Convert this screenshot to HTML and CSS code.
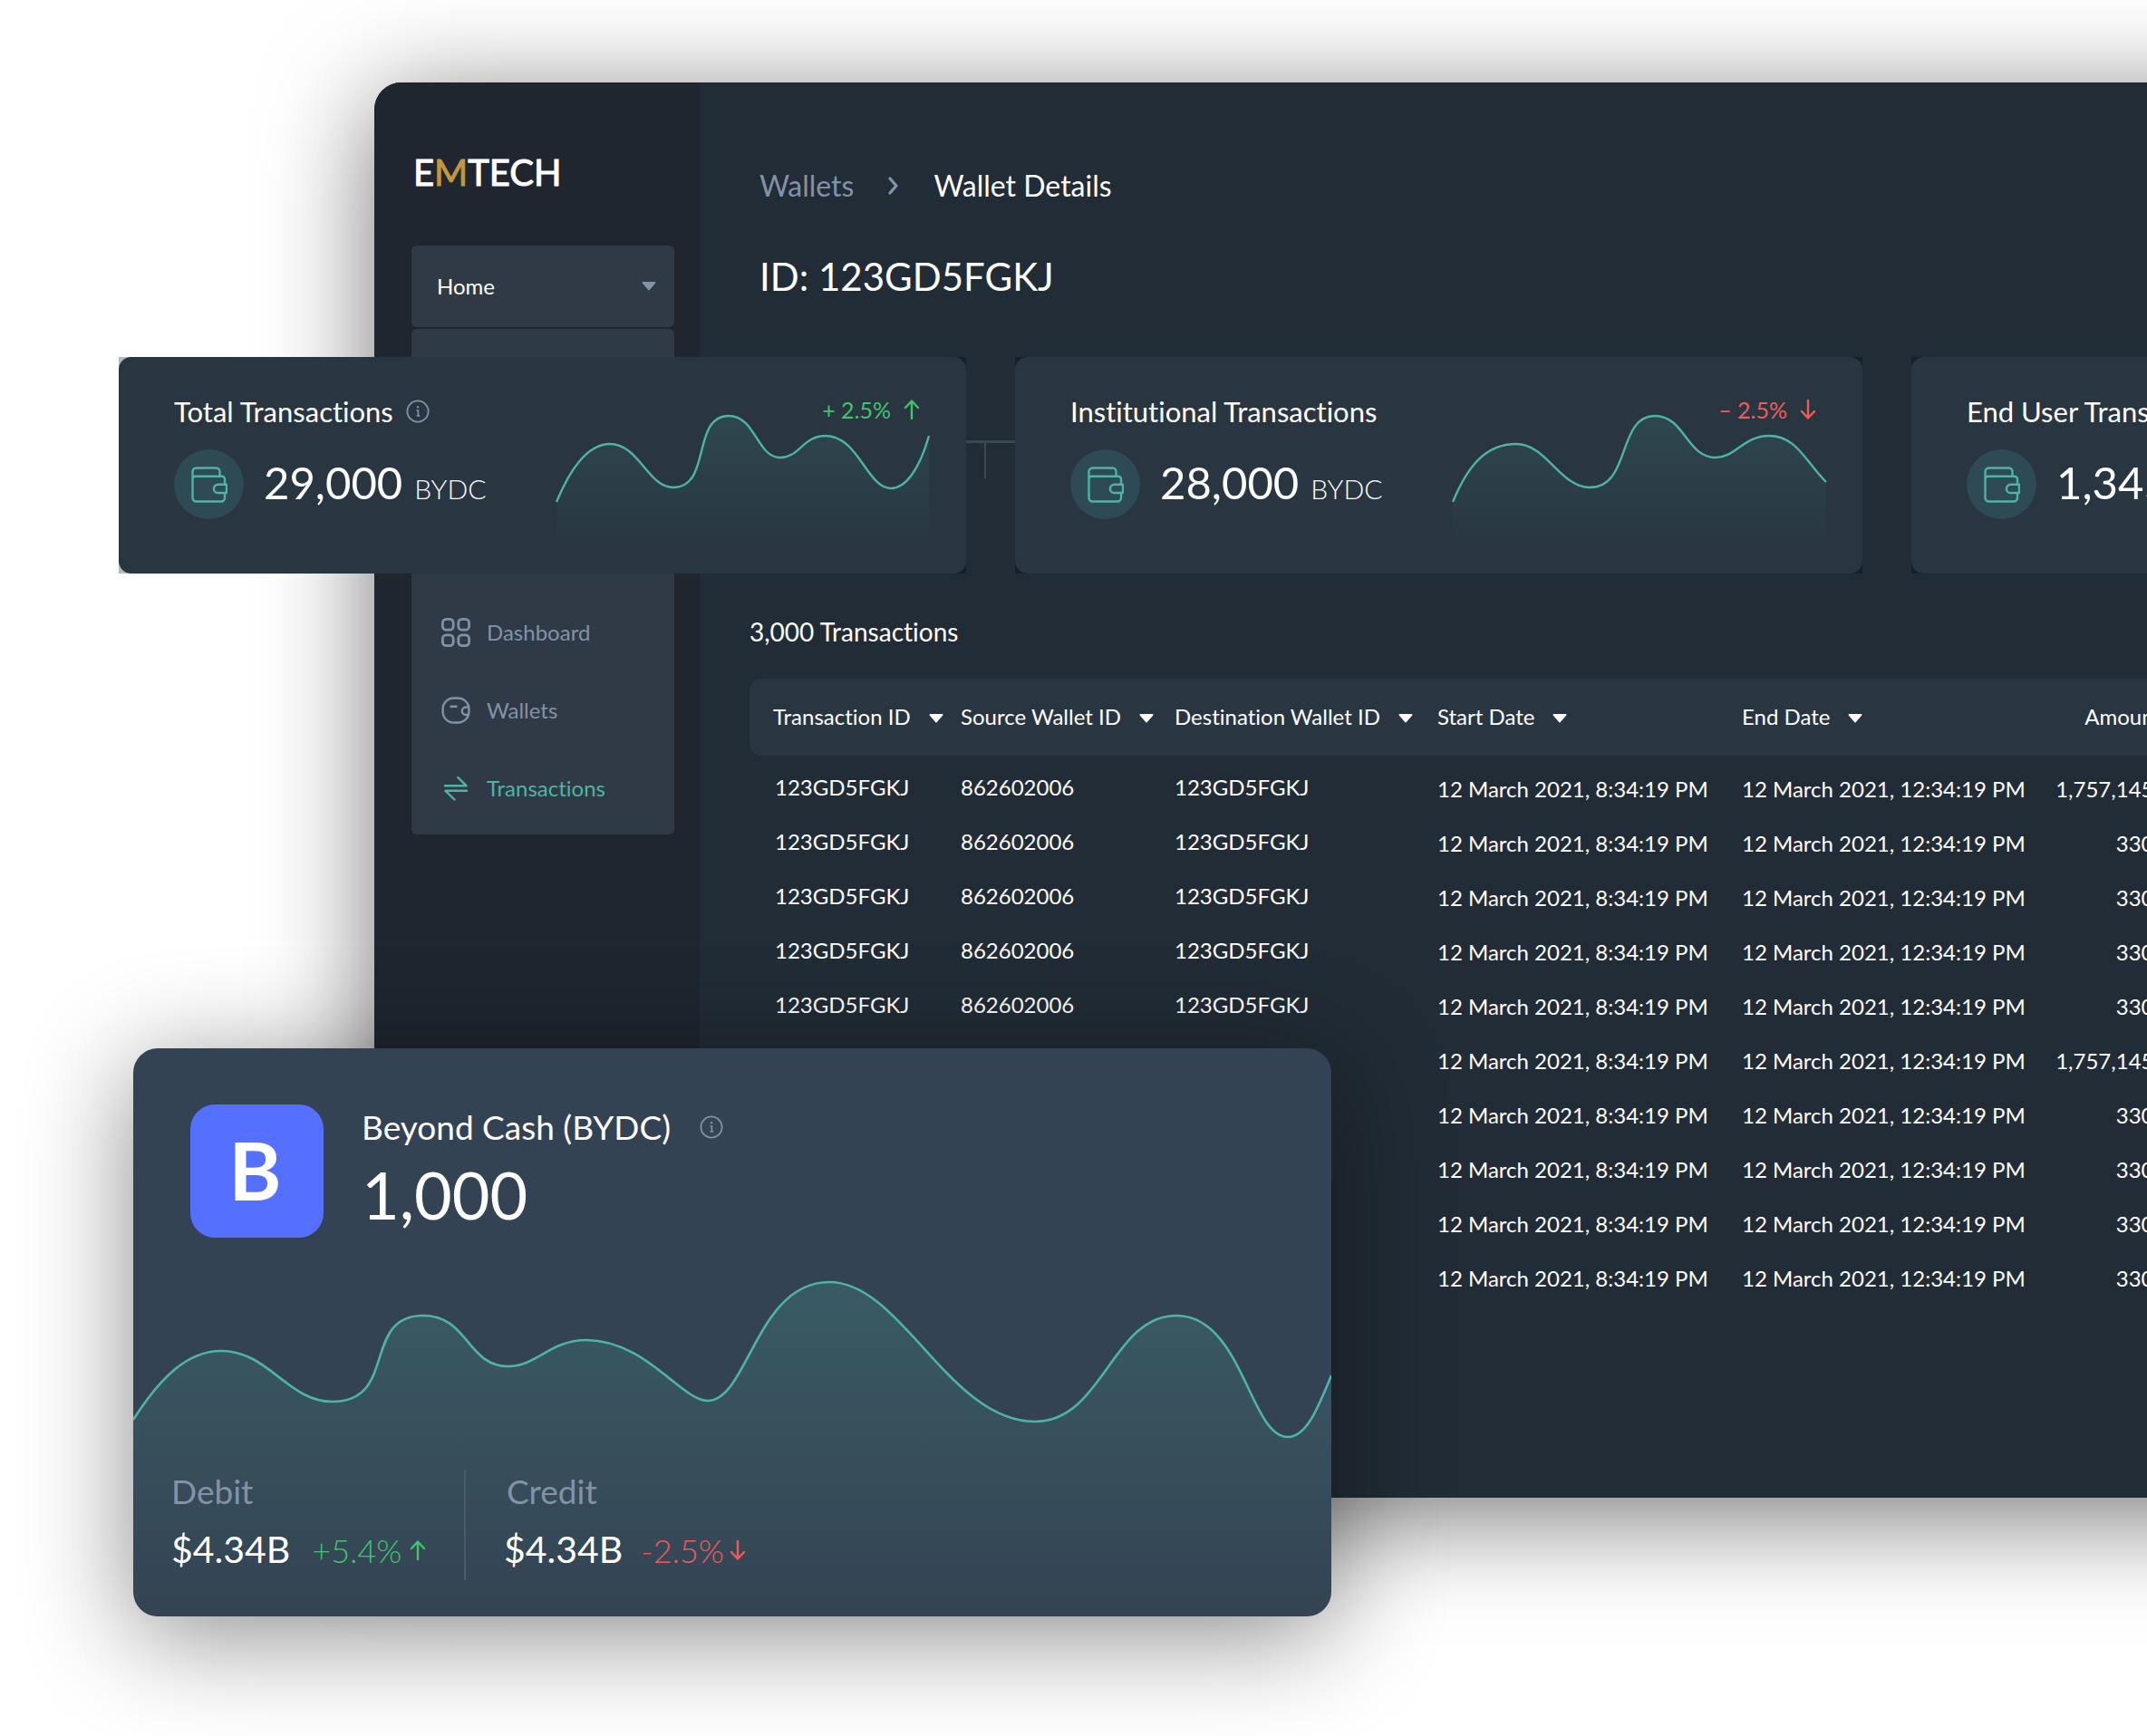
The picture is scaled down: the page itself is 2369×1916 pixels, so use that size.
FILE: index.html
```html
<!DOCTYPE html>
<html lang="en">
<head>
<meta charset="utf-8">
<title>EMTECH – Wallet Details</title>
<link rel="stylesheet" href="styles.css">
</head>
<body>
<svg class="sprite" aria-hidden="true">
  <defs>
    <linearGradient id="fade" x1="0" y1="0" x2="0" y2="1">
      <stop offset="0" stop-color="#4aaea0" stop-opacity=".22"/>
      <stop offset="1" stop-color="#4aaea0" stop-opacity="0"/>
    </linearGradient>
    <linearGradient id="fade-soft" x1="0" y1="0" x2="0" y2="1">
      <stop offset="0" stop-color="#4aaea0" stop-opacity=".14"/>
      <stop offset="1" stop-color="#4aaea0" stop-opacity=".01"/>
    </linearGradient>
  </defs>
  <symbol id="info" viewBox="0 0 26 26">
    <circle cx="13" cy="13" r="11.6" fill="none" stroke="#8292a8" stroke-width="1.8"/>
    <path d="M11.400 12h2v6M11.600 18h3.800" fill="none" stroke="#8292a8" stroke-width="1.700"/>
    <circle cx="13" cy="8.200" r="1.200" fill="#8292a8"/>
  </symbol>
  <symbol id="wallet" viewBox="0 0 40 40">
    <g fill="none" stroke="#4fb3a5" stroke-width="2.4" stroke-linejoin="round">
      <path d="M1.500 5.500a4 4 0 0 1 4-4h22a4 4 0 0 1 4 4v5.200M1.500 5.500v29a4 4 0 0 0 4 4h27.500a4 4 0 0 0 4-4v-5.500M1.500 13.500a3 3 0 0 1 3-2.800h29.500a3 3 0 0 1 3 3v5.800"/>
      <path d="M39 19.800h-9.500a4.600 4.600 0 0 0 0 9.200h9.500z"/>
    </g>
  </symbol>
  <symbol id="caret" viewBox="0 0 16 10"><path d="M1.500 0h13a1 1 0 0 1 .8 1.600L8.800 9a1 1 0 0 1-1.600 0L.7 1.600A1 1 0 0 1 1.500 0z" fill="currentColor"/></symbol>
  <symbol id="arrow" viewBox="0 0 20 22"><path d="M10 21V2M3 9l7-7.500L17 9" fill="none" stroke="currentColor" stroke-width="2.400" stroke-linecap="round" stroke-linejoin="round"/></symbol>
</svg>

<div class="stage">
  <div class="window">
    <aside class="sidebar">
      <div class="logo">E<span>M</span>TECH</div>
      <button class="picker" type="button">Home <svg class="caret" aria-hidden="true"><use href="#caret"/></svg></button>
      <nav class="menu">
        <a href="#dashboard"><svg class="nav-icon" viewBox="0 0 32 32" aria-hidden="true"><g fill="none" stroke="currentColor" stroke-width="2.800"><rect x="1.400" y="1.400" width="11.800" height="11.800" rx="4"/><rect x="18.800" y="1.400" width="11.800" height="11.800" rx="4"/><rect x="1.400" y="18.800" width="11.800" height="11.800" rx="4"/><rect x="18.800" y="18.800" width="11.800" height="11.800" rx="4"/></g></svg>Dashboard</a>
        <a href="#wallets"><svg class="nav-icon" viewBox="0 0 32 32" aria-hidden="true"><g fill="none" stroke="currentColor" stroke-width="2.400"><rect x="1.600" y="2.500" width="28.800" height="27" rx="12"/><path d="M9.500 11.800h8M30 12.500h-3a4.200 4.200 0 0 0 0 8.400h3"/></g></svg>Wallets</a>
        <a href="#transactions" class="current"><svg class="nav-icon" viewBox="0 0 32 32" aria-hidden="true"><path d="M4 13.200h23.500L18.200 4M28 18.800H4.500l10 9.700" fill="none" stroke="currentColor" stroke-width="2.400" stroke-linecap="round" stroke-linejoin="round"/></svg>Transactions</a>
      </nav>
    </aside>
    <main class="content">
      <div class="crumbs">
        <a href="#wallets">Wallets</a>
        <svg class="chevron" viewBox="0 0 12 20" aria-hidden="true"><path d="M2 2l7 8-7 8" fill="none" stroke="#8292a8" stroke-width="3.400" stroke-linecap="round" stroke-linejoin="round"/></svg>
        <span>Wallet Details</span>
      </div>
      <h1>ID: 123GD5FGKJ</h1>
      <div class="rule"><i></i></div>
      <h2>3,000 Transactions</h2>
      <table>
        <thead><tr>
          <th class="c1">Transaction ID<svg class="caret" aria-hidden="true"><use href="#caret"/></svg></th>
          <th class="c2">Source Wallet ID<svg class="caret" aria-hidden="true"><use href="#caret"/></svg></th>
          <th class="c3">Destination Wallet ID<svg class="caret" aria-hidden="true"><use href="#caret"/></svg></th>
          <th class="c4">Start Date<svg class="caret" aria-hidden="true"><use href="#caret"/></svg></th>
          <th class="c5">End Date<svg class="caret" aria-hidden="true"><use href="#caret"/></svg></th>
          <th class="c6">Amount<svg class="caret" aria-hidden="true"><use href="#caret"/></svg></th>
        </tr></thead>
        <tbody>
          <tr><td>123GD5FGKJ</td><td>862602006</td><td>123GD5FGKJ</td><td>12 March 2021, 8:34:19 PM</td><td>12 March 2021, 12:34:19 PM</td><td>1,757,145.00</td></tr>
          <tr><td>123GD5FGKJ</td><td>862602006</td><td>123GD5FGKJ</td><td>12 March 2021, 8:34:19 PM</td><td>12 March 2021, 12:34:19 PM</td><td>330.00</td></tr>
          <tr><td>123GD5FGKJ</td><td>862602006</td><td>123GD5FGKJ</td><td>12 March 2021, 8:34:19 PM</td><td>12 March 2021, 12:34:19 PM</td><td>330.00</td></tr>
          <tr><td>123GD5FGKJ</td><td>862602006</td><td>123GD5FGKJ</td><td>12 March 2021, 8:34:19 PM</td><td>12 March 2021, 12:34:19 PM</td><td>330.00</td></tr>
          <tr><td>123GD5FGKJ</td><td>862602006</td><td>123GD5FGKJ</td><td>12 March 2021, 8:34:19 PM</td><td>12 March 2021, 12:34:19 PM</td><td>330.00</td></tr>
          <tr><td></td><td></td><td></td><td>12 March 2021, 8:34:19 PM</td><td>12 March 2021, 12:34:19 PM</td><td>1,757,145.00</td></tr>
          <tr><td></td><td></td><td></td><td>12 March 2021, 8:34:19 PM</td><td>12 March 2021, 12:34:19 PM</td><td>330.00</td></tr>
          <tr><td></td><td></td><td></td><td>12 March 2021, 8:34:19 PM</td><td>12 March 2021, 12:34:19 PM</td><td>330.00</td></tr>
          <tr><td></td><td></td><td></td><td>12 March 2021, 8:34:19 PM</td><td>12 March 2021, 12:34:19 PM</td><td>330.00</td></tr>
          <tr><td></td><td></td><td></td><td>12 March 2021, 8:34:19 PM</td><td>12 March 2021, 12:34:19 PM</td><td>330.00</td></tr>
        </tbody>
      </table>
    </main>
  </div>

  <div class="stats">
    <div class="stat-back"><section class="stat">
      <div class="stat-text">
        <h3>Total Transactions <svg class="info" aria-hidden="true"><use href="#info"/></svg></h3>
        <div class="figure"><span class="disc"><svg class="wallet" aria-hidden="true"><use href="#wallet"/></svg></span><p><b>29,000</b><small>BYDC</small></p></div>
      </div>
      <div class="trend">
        <svg class="spark" viewBox="0 0 414 136" aria-hidden="true">
          <path fill="url(#fade-soft)" d="M1 97C18 56 38 33 60 33C92 33 102 81 130 81C172 81 150 2 191 2C221 2 222 48 248 48C269 48 273 24 298 24C334 24 344 82 370 82C386 82 401 62 412 24V136H1Z"/>
          <path fill="none" stroke="#4fb3a5" stroke-width="2.400" d="M1 97C18 56 38 33 60 33C92 33 102 81 130 81C172 81 150 2 191 2C221 2 222 48 248 48C269 48 273 24 298 24C334 24 344 82 370 82C386 82 401 62 412 24"/>
        </svg>
        <span class="delta up">+ 2.5% <svg class="arrow" aria-hidden="true"><use href="#arrow"/></svg></span>
      </div>
    </section></div>
    <div class="stat-back"><section class="stat">
      <div class="stat-text">
        <h3>Institutional Transactions</h3>
        <div class="figure"><span class="disc"><svg class="wallet" aria-hidden="true"><use href="#wallet"/></svg></span><p><b>28,000</b><small>BYDC</small></p></div>
      </div>
      <div class="trend">
        <svg class="spark" viewBox="0 0 414 136" aria-hidden="true">
          <path fill="url(#fade-soft)" d="M1 97C18 56 38 33 71 33C104 33 120 81 152 81C198 81 182 2 224 2C257 2 259 48 291 48C313 48 322 24 350 24C380 24 390 52 413 75V136H1Z"/>
          <path fill="none" stroke="#4fb3a5" stroke-width="2.400" d="M1 97C18 56 38 33 71 33C104 33 120 81 152 81C198 81 182 2 224 2C257 2 259 48 291 48C313 48 322 24 350 24C380 24 390 52 413 75"/>
        </svg>
        <span class="delta down">– 2.5% <svg class="arrow" aria-hidden="true"><use href="#arrow"/></svg></span>
      </div>
    </section></div>
    <div class="stat-back"><section class="stat">
      <div class="stat-text">
        <h3>End User Transactions</h3>
        <div class="figure"><span class="disc"><svg class="wallet" aria-hidden="true"><use href="#wallet"/></svg></span><p><b>1,345</b><small>BYDC</small></p></div>
      </div>
    </section></div>
  </div>

  <section class="cash">
    <svg class="wave" viewBox="0 0 1322 372" preserveAspectRatio="none" aria-hidden="true">
      <path fill="url(#fade)" d="M0 155C30 108 60 79 97 79C150 79 170 135 220 135C292 135 252 40 320 40C370 40 368 96 414 96C445 96 460 67 500 67C565 67 605 134 634 134C678 134 688 3 768 3C848 3 900 157 995 157C1070 157 1080 40 1151 40C1224 40 1232 174 1274 174C1295 174 1308 140 1322 106V372H0Z"/>
      <path fill="none" stroke="#4fb3a5" stroke-width="2.600" d="M0 155C30 108 60 79 97 79C150 79 170 135 220 135C292 135 252 40 320 40C370 40 368 96 414 96C445 96 460 67 500 67C565 67 605 134 634 134C678 134 688 3 768 3C848 3 900 157 995 157C1070 157 1080 40 1151 40C1224 40 1232 174 1274 174C1295 174 1308 140 1322 106"/>
    </svg>
    <header class="cash-head">
      <div class="badge">B</div>
      <div>
        <h3>Beyond Cash (BYDC) <svg class="info" aria-hidden="true"><use href="#info"/></svg></h3>
        <p class="total">1,000</p>
      </div>
    </header>
    <div class="flows">
      <div class="flow">
        <h4>Debit</h4>
        <p><b>$4.34B</b><span class="up">+5.4%<svg class="arrow" aria-hidden="true"><use href="#arrow"/></svg></span></p>
      </div>
      <div class="flow credit">
        <h4>Credit</h4>
        <p><b>$4.34B</b><span class="down">-2.5%<svg class="arrow" aria-hidden="true"><use href="#arrow"/></svg></span></p>
      </div>
    </div>
  </section>
</div>
</body>
</html>
```

FILE: styles.css
```css
* { box-sizing: border-box; }
body {
  margin: 0;
  background: #fff;
  color: #fff;
  font-family: Lato, "Liberation Sans", sans-serif;
  font-size: 24px;
  font-variant-ligatures: none;
  overflow-x: hidden;
}
h1, h2, h3, h4, p { margin: 0; font-weight: 400; }
b, small { font-weight: 400; }
a { color: inherit; text-decoration: none; }
svg { flex: none; overflow: visible; }
.sprite { position: absolute; width: 0; height: 0; }
.stage { position: relative; padding: 91px 0 263px 413px; overflow: hidden; }

.window {
  display: flex;
  width: calc(100% + 200px);
  min-height: 1562px;
  border-radius: 30px;
  background: #222c36;
  box-shadow: 0 20px 120px rgba(0, 0, 0, .54);
}
.sidebar {
  flex: none;
  width: 359px;
  padding: 76px 28px 0 41px;
  border-radius: 30px 0 0 30px;
  background: #1f262f;
}
.logo { padding-left: 2px; font-size: 40px; line-height: 46px; -webkit-text-stroke: 1px currentColor; }
.logo span { color: #c4963f; }
.picker {
  display: flex;
  align-items: center;
  justify-content: space-between;
  width: 100%;
  height: 90px;
  margin: 58px 0 2px;
  padding: 0 20px 0 28px;
  border: 0;
  border-radius: 6px;
  background: #303a46;
  color: #fff;
  font: inherit;
  line-height: 30px;
  text-align: left;
}
.caret { width: 16px; height: 10px; }
.picker .caret { color: #8292a8; }
.menu {
  display: flex;
  flex-direction: column;
  gap: 46px;
  height: 558px;
  padding: 316px 0 0 33px;
  border-radius: 6px;
  background: #303a46;
  color: #8292a8;
}
.menu a { display: flex; align-items: center; gap: 18px; height: 40px; line-height: 40px; padding-bottom: 2px; }
.menu .current { color: #4fb3a5; }
.nav-icon { width: 32px; height: 32px; }

.content { flex: 1; min-width: 0; padding: 90px 0 0 55px; }
.crumbs { display: flex; align-items: center; gap: 38px; padding-left: 11px; font-size: 32px; line-height: 48px; }
.crumbs a { color: #8292a8; }
.chevron { width: 12px; height: 20px; }
h1 { padding-left: 11px; margin-top: 51px; font-size: 42px; line-height: 50px; }
.rule { width: 320px; height: 42px; margin: 156px 0 149px; border-top: 3px solid #3a4652; }
.rule i { display: block; width: 2px; height: 39px; margin-left: 259px; background: #3a4652; }
h2 { font-size: 28px; line-height: 40px; }

table { width: 1760px; margin-top: 32px; border-collapse: separate; border-spacing: 0; table-layout: fixed; }
th { height: 85px; padding: 0 0 2px; background: #293642; font-weight: 400; text-align: left; }
th .caret { margin-left: 20px; vertical-align: 2px; }
th:first-child { border-radius: 14px 0 0 14px; padding-left: 26px; }
td { height: 60px; padding: 13px 0 0; line-height: 47px; vertical-align: top; }
td:nth-child(-n+3) { padding-top: 11px; }
td:first-child { padding-left: 28px; }
th:last-child, td:last-child { padding-right: 177px; text-align: right; }
th:last-child { padding-right: 166px; }
.c1 { width: 233px; }
.c2 { width: 236px; }
.c3 { width: 290px; }
.c4 { width: 336px; }
.c5 { width: 320px; }

.stats { position: absolute; top: 394px; left: 131px; display: flex; gap: 54px; }
.stat-back { flex: none; width: 935px; background: rgba(0, 0, 0, .28); }
.stat {
  display: flex;
  justify-content: space-between;
  height: 239px;
  padding: 42px 39px 0 61px;
  border-radius: 14px;
  background: #293642;
}
.stat h3 { display: flex; align-items: center; gap: 14px; font-size: 31px; line-height: 36px; }
.info { width: 26px; height: 26px; }
.figure { display: flex; align-items: center; gap: 22px; margin-top: 24px; }
.figure p { padding-bottom: 6px; }
.disc { display: grid; place-items: center; width: 77px; height: 77px; border-radius: 50%; background: #2e4a54; }
.wallet { width: 40px; height: 40px; }
.figure b { font-size: 49px; line-height: 60px; }
.figure small { margin-left: 13px; font-size: 30px; font-weight: 300; }
.trend { position: relative; width: 414px; padding-top: 21px; }
.spark { display: block; width: 414px; height: 136px; }
.delta { position: absolute; top: 0; right: 11px; display: flex; align-items: center; gap: 13px; font-size: 25px; line-height: 32px; }
.arrow { width: 20px; height: 22px; }
.up { color: #41c46d; }
.down { color: #ef5b5b; }
.down .arrow { transform: rotate(180deg); }

.cash {
  position: absolute;
  top: 1157px;
  left: 147px;
  display: flex;
  flex-direction: column;
  justify-content: space-between;
  width: 1322px;
  height: 627px;
  padding: 62px 42px 40px;
  border-radius: 27px;
  background: #344353;
  box-shadow: 0 20px 120px rgba(0, 0, 0, .46);
  overflow: hidden;
}
.wave { position: absolute; left: 0; bottom: 0; width: 100%; height: 372px; }
.cash-head { display: flex; gap: 42px; padding-left: 21px; }
.badge { display: grid; place-items: center; width: 147px; height: 147px; padding: 0 4px 4px 0; border-radius: 27px; background: #5570ff; font-size: 88px; font-weight: 700; line-height: 1; }
.cash-head h3 { display: flex; align-items: center; gap: 32px; font-size: 37px; line-height: 50px; }
.total { font-size: 72px; line-height: 98px; }
.flows { position: relative; display: flex; }
.flow { width: 323px; height: 122px; }
.flow h4 { color: #8292a8; font-size: 37px; line-height: 48px; }
.flow p { display: flex; align-items: baseline; margin-top: 14px; font-size: 41px; line-height: 52px; }
.flow span { display: flex; align-items: center; gap: 8px; margin-left: 24px; font-size: 36px; font-weight: 300; }
.credit { width: 400px; padding-left: 42px; border-left: 2px solid #4a5a6c; }
.credit h4 { padding-left: 3px; }
.credit span { gap: 5px; margin-left: 20px; }
```
